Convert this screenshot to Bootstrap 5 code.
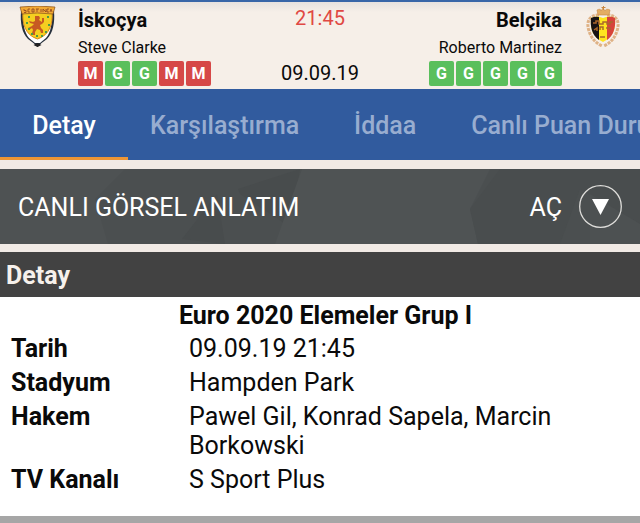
<!DOCTYPE html>
<html lang="tr">
<head>
<meta charset="utf-8">
<meta name="viewport" content="width=device-width, initial-scale=1">
<title>İskoçya - Belçika</title>
<link href="https://cdn.jsdelivr.net/npm/bootstrap@5.3.0/dist/css/bootstrap.min.css" rel="stylesheet">
<style>
  body { font-family: Roboto, "Liberation Sans", sans-serif; background: #f1eae5; color: #0a0a0a; }
  .match-head { border-top: 2px solid #3866a8; background: linear-gradient(#e7e2df, #f6efe8 10px); padding: 4px 16px 3px; }
  .crest { width: 44px; height: 41px; }
  .side { flex: 1 1 0; margin: 0 18px; }
  .team-name { font-size: 20px; line-height: 28px; font-weight: 700; }
  .coach { font-size: 16px; line-height: 27px; }
  .form-box { width: 25px; height: 25px; font-size: 16px; line-height: 25px; font-weight: 700; color: #fff; border-radius: 2px; text-align: center; }
  .win { background: #5abf5c; }
  .loss { background: #d64847; }
  .form-row { gap: 2px; }
  .kickoff { font-size: 20px; line-height: 24px; color: #e04843; }
  .match-date { font-size: 20px; line-height: 25px; }
  .tabs { background: #315b9e; overflow: hidden; }
  .tabs .nav-link { min-width: 128px; padding: 20px 22px 14px; border-bottom: 3px solid transparent; font-size: 25px; line-height: 34px; font-weight: 500; text-align: center; white-space: nowrap; color: #98add0; }
  .tabs .nav-link.active { color: #fff; border-bottom-color: #ee9635; }
  .live { margin: 9px 0 8px; padding: 16px 18px; font-size: 25px; line-height: 30px; color: #fff; background: #4b4f50; }
  .live-art { position: absolute; inset: 0; width: 100%; height: 100%; }
  .live-text { padding-top: 2px; }
  .toggle { gap: 17px; color: #fff; }
  .section-title { padding: 8px 6px 6px; margin: 0; font-size: 25px; line-height: 31px; font-weight: 700; background: #424242; color: #f6f1ec; }
  .facts { background: #fff; padding: 2px 11px 19px; border-bottom: 8px solid #a6a6a6; }
  .facts table { width: 100%; font-size: 25px; line-height: 29px; }
  .facts caption { caption-side: top; text-align: center; color: #0a0a0a; font-weight: 700; padding: 2px 0; }
  .facts caption span { padding-left: 11px; }
  .facts th, .facts td { padding: 2px 0 3px; vertical-align: top; }
  .facts th { width: 178px; font-weight: 700; }
  .facts td { padding-right: 70px; }
</style>
<script src="https://cdn.jsdelivr.net/npm/bootstrap@5.3.0/dist/js/bootstrap.bundle.min.js"></script>
</head>
<body>
<header class="match-head d-flex align-items-start">
  <svg class="crest flex-shrink-0" viewBox="0 0 44 41" role="img" aria-label="İskoçya arması">
    <path d="M5 5C4 17 6 27 12 33Q18 37 21.500 41Q25 37 31 33C37 27 39 17 38 5Z" fill="#26303c"/>
    <path d="M7 6C7 18 8 26 13 32L19 37H24L30 32C35 26 36 18 36 6Z" fill="#fff"/>
    <path d="M7 6C6 17 9 29 21.500 33C34 29 37 17 36 6Z" fill="#f5cf20" stroke="#d98920"/>
    <path d="M4 1Q21 -1 39 1L37 8Q21 6 6 8Z" fill="#f2a935" stroke="#87501c" stroke-width=".7"/>
    <path d="M8 3v1.500h2v2H8M14 3h-2v3h2M16 3v3h2V3zM21 3v3M20 3h3M25 3v3M27 6V3l3 3V3M33 3h-2v3h2M34 6l1-3 1 3" fill="none" stroke="#8b451e" stroke-width=".8"/>
    <path d="M19 10h4l1 2-1 2 3 2v-4h2v4l-2 2-2 1 1 3 2 2v3h-2l-1-3-3-1-2 3v3h-3v-2l1-3-1-2-3 2-1-2 4-2 2-2-4-1-1-2 4 1 2-1z" fill="#c75a22"/>
    <path d="M12 10h2v2h-2zM31 10h2v2h-2zM10 16h2v2h-2zM32 18h2v2h-2zM12 22h2v2h-2zM29 25h2v2h-2zM15 27h2v2h-2zM20 29h2v2h-2zM25 29h2v2h-2z" fill="#4c9a45"/>
    <path d="M17.500 39l4-2 4 2-4 2z" fill="#222"/>
  </svg>
  <div class="side">
    <div class="team-name">İskoçya</div>
    <div class="coach">Steve Clarke</div>
    <div class="form-row d-flex">
      <span class="form-box loss">M</span><span class="form-box win">G</span><span class="form-box win">G</span><span class="form-box loss">M</span><span class="form-box loss">M</span>
    </div>
  </div>
  <div class="d-flex flex-column justify-content-between align-items-center align-self-stretch">
    <time class="kickoff">21:45</time>
    <time class="match-date" datetime="2019-09-09">09.09.19</time>
  </div>
  <div class="side text-end">
    <div class="team-name">Belçika</div>
    <div class="coach">Roberto Martinez</div>
    <div class="form-row d-flex justify-content-end">
      <span class="form-box win">G</span><span class="form-box win">G</span><span class="form-box win">G</span><span class="form-box win">G</span><span class="form-box win">G</span>
    </div>
  </div>
  <svg class="crest flex-shrink-0" viewBox="0 0 44 41" role="img" aria-label="Belçika arması">
    <path d="M19 9C9 9 6 16 9 25Q12 35 22 40M27 9C37 9 40 16 37 25Q34 35 24 40" fill="none" stroke="#dfb286" stroke-width="3" stroke-dasharray="3 1"/>
    <path d="M11 12Q17 9 23 12Q29 9 35 12C36 23 33 31 23 36C13 31 10 24 11 12Z" fill="#ffe51f"/>
    <path d="M11 12Q15 10 19 11V34C12 29 10 21 11 12Z" fill="#171315"/>
    <path d="M27 11Q32 10 35 12C36 22 33 30 27 34Z" fill="#d7433b"/>
    <path d="M18 9l-1-5q4-2 4 1l2-3 2 3q1-3 5-1l-1 5z" fill="#e3ad63" stroke="#c88742" stroke-width=".6"/>
    <path d="M23.500 0v4M21.500 1.500h4" stroke="#c88742"/>
    <path d="M13 17h3v-2h3v3h4v-2h4v2h3v-2h3M14 24l3-2v3M20 24v-3h3v3M26 22h4v2M20 31h5" fill="none" stroke="#a9672c" stroke-width="1.500"/>
  </svg>
</header>

<nav class="tabs nav flex-nowrap">
  <a class="nav-link active flex-shrink-0" aria-current="page" href="#detay">Detay</a>
  <a class="nav-link flex-shrink-0" href="#karsilastirma">Karşılaştırma</a>
  <a class="nav-link flex-shrink-0" href="#iddaa">İddaa</a>
  <a class="nav-link flex-shrink-0" href="#puan">Canlı Puan Durumu</a>
</nav>

<section class="live position-relative">
  <svg class="live-art" viewBox="0 0 640 75" preserveAspectRatio="none" aria-hidden="true">
    <path d="M0 0H125L95 30 108 75H0Z" fill="#4e5253"/>
    <path d="M238 20L300 0 290 58 240 25ZM182 70l35-45 8 50z" fill="#484c4d"/>
    <path d="M302 0H490L470 40 478 75H275Z" fill="#4f5354"/>
    <path d="M560 75l20-55 60 35V0H500L470 40 478 75Z" fill="#494d4e"/>
    <path d="M590 25L640 55V75H590Z" fill="#4d5152"/>
  </svg>
  <div class="position-relative d-flex justify-content-between align-items-center">
    <span class="live-text">CANLI GÖRSEL ANLATIM</span>
    <button type="button" class="toggle d-flex align-items-center bg-transparent border-0 p-0">
      <span class="live-text">AÇ</span>
      <svg width="43" height="43" viewBox="0 0 43 43" aria-hidden="true"><circle cx="21.500" cy="21.500" r="20.800" fill="none" stroke="#deddda" stroke-width="1.300"/><path d="M13 14H30L21.500 30Z" fill="#fff"/></svg>
    </button>
  </div>
</section>

<main id="detay">
  <h2 class="section-title">Detay</h2>
  <div class="facts">
    <table>
      <caption><span>Euro 2020 Elemeler Grup I</span></caption>
      <tbody>
        <tr><th scope="row">Tarih</th><td>09.09.19 21:45</td></tr>
        <tr><th scope="row">Stadyum</th><td>Hampden Park</td></tr>
        <tr><th scope="row">Hakem</th><td>Pawel Gil, Konrad Sapela, Marcin Borkowski</td></tr>
        <tr><th scope="row">TV Kanalı</th><td>S Sport Plus</td></tr>
      </tbody>
    </table>
  </div>
</main>
</body>
</html>
